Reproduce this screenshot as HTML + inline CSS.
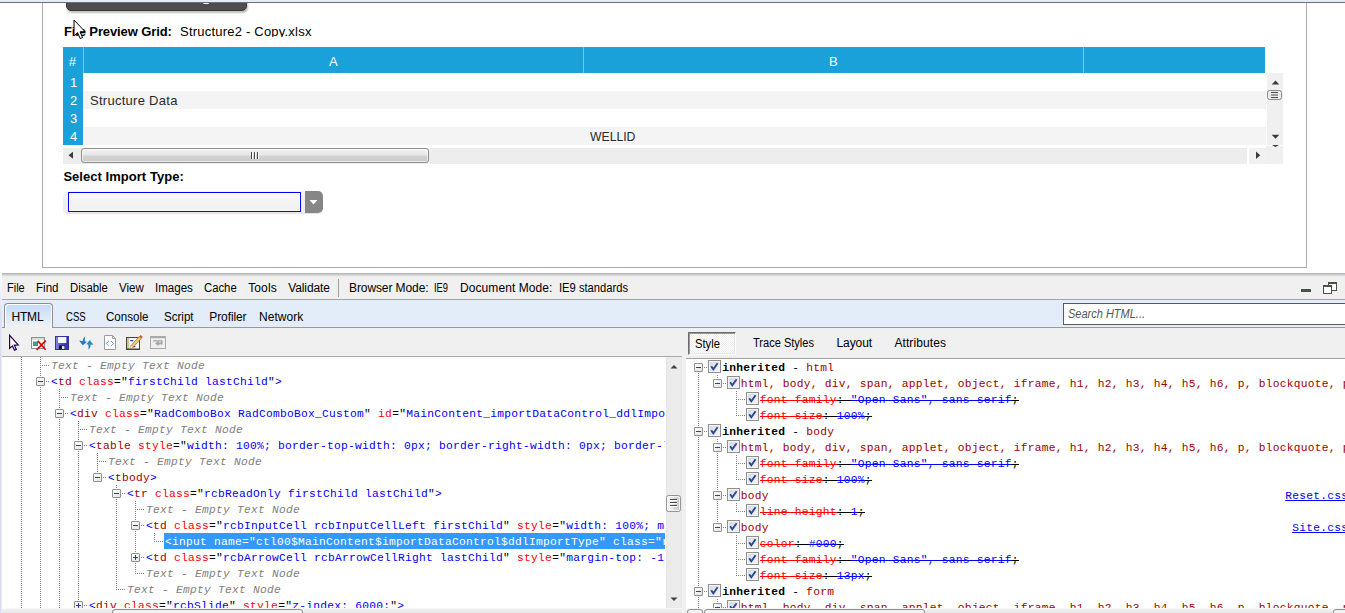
<!DOCTYPE html>
<html lang="en">
<head>
<meta charset="utf-8">
<title>Import Data - Developer Tools</title>
<style>
*{box-sizing:border-box;margin:0;padding:0}
html,body{width:1345px;height:613px;overflow:hidden;background:#fff;font-family:"Liberation Sans",sans-serif}
body{position:relative}
.abs,.t,.row,.bx,.hd,.vd,.cb{position:absolute}
.t{white-space:pre;line-height:20px;height:20px}
i{font-style:normal}
/* page */
#topstrip{left:0;top:0;width:1345px;height:2px;background:#e3edf9}
#topline{left:0;top:2px;width:1345px;height:1px;background:#707070}
#container{left:42px;top:-5px;width:1265px;height:273px;border:1px solid #ababab}
#darkbtn{left:66px;top:-10px;width:181px;height:21px;background:#4d4d4d;border:1px solid #3a3a3a;border-radius:5px;box-shadow:1px 2px 2px rgba(0,0,0,.25)}
#darkmark{left:203px;top:3px;width:6px;height:1px;background:linear-gradient(90deg,#aaa,#fff 25%,#fff 75%,#aaa)}
#ghead{left:63px;top:47px;width:1202px;height:26px;background:#1ba1da}
.csep{top:47px;width:1px;height:26px;background:#a3b9c4}
#gnum{left:63px;top:73px;width:20px;height:72px;background:#1ba1da}
.grow{left:83px;width:1183px;height:18px}
#vsb{left:1267px;top:73px;width:16px;height:72px;background:#f0f0f0}
#vcorner{left:1266px;top:146px;width:17px;height:18px;background:#f0f0f0}
#hbtn{left:1249px;top:148px;width:17px;height:16px;background:#f1f1f1}
#hsb{left:63px;top:148px;width:1184px;height:16px;background:#ededed}
#hthumb{left:81px;top:148px;width:348px;height:15px;border:1px solid #8f8f8f;border-radius:3px;background:linear-gradient(#f4f4f4,#e6e6e6 45%,#d4d4d4 55%,#c9c9c9);box-shadow:inset 0 0 0 1px rgba(255,255,255,.6)}
#combo{left:63px;top:191px;width:260px;height:22px;background:linear-gradient(#f6f6f6,#ececec);border-radius:5px;box-shadow:0 1px 1px rgba(0,0,0,.12)}
#cinput{left:68px;top:192px;width:233px;height:20px;border:1px solid #0000f6;background:linear-gradient(#fcfcfc,#f4f4f4 40%,#f2f2f2);box-shadow:inset 0 0 0 1px #fdfdf4}
#carrow{left:305px;top:191px;width:18px;height:22px;background:#868686;border-radius:0 5px 5px 0}
/* devtools */
#dt{left:2px;top:273px;width:1343px;height:340px;background:#f0f0f0}
#dttop{left:2px;top:273px;width:1343px;height:4px;background:linear-gradient(#b0b0b0,#c4c4c4 30%,#e2e2e2 70%,#f0f0f0)}
#menusep{left:338px;top:279px;width:1px;height:18px;background:#a0a0a0}
#tabbar{left:2px;top:299px;width:1343px;height:29px;background:#e3edf9;border-top:1px solid #a5a5a5;border-bottom:1px solid #9a9a9a}
#htmltab{left:4px;top:303px;width:49px;height:25px;border:1px solid #8e8e8e;border-bottom:none;border-radius:4px 4px 0 0;background:linear-gradient(#c3daf8,#dce8f8 55%,#eef1f5 90%,#f0f0f0);box-shadow:inset 1px 1px 0 #fff,inset -1px 0 0 #fff}
#search{left:1063px;top:303px;width:290px;height:22px;background:#fff;border:1px solid #5a5a5a}
#toolbar{left:2px;top:328px;width:1343px;height:28px;background:#f0f0f0}
#tbline{left:2px;top:356px;width:680px;height:1px;background:#a9a9a9}
#tbline2{left:686px;top:358px;width:660px;height:1px;background:#a2a2a2}
#ltree{left:2px;top:357px;width:664px;height:251px;background:#fff;overflow:hidden}
#rtree{left:686px;top:359px;width:659px;height:249px;background:#fff;overflow:hidden}
#lsb{left:666px;top:357px;width:16px;height:251px;background:linear-gradient(90deg,#e3e3e3,#ebebeb 2px,#ececec 14px,#e8e8e8)}
#split{left:682px;top:357px;width:4px;height:256px;background:#f0f0f0}
#lthumb{left:666px;top:495px;width:15px;height:17px;border:1px solid #949494;border-radius:2.5px;background:linear-gradient(90deg,#f5f5f5,#e8e8e8 45%,#d6d6d6 55%,#cdcdcd);box-shadow:inset 0 0 0 1px rgba(255,255,255,.7)}
#lhs{left:2px;top:608px;width:680px;height:5px;background:linear-gradient(#fbfbfb,#efefef 1.5px,#e6e6e6)}
#lhthumb{left:112px;top:609px;width:191px;height:6px;border:1px solid #8e8e8e;border-radius:3px;background:#f2f2f2}
#rhs{left:686px;top:608px;width:659px;height:5px;background:linear-gradient(#fbfbfb,#efefef 1.5px,#e6e6e6)}
#rhbtn{left:687px;top:609px;width:16px;height:6px;border:1px solid #8e8e8e;border-radius:3px;background:#f2f2f2}
#rhthumb{left:704px;top:609px;width:221px;height:6px;border:1px solid #8e8e8e;border-radius:3px;background:#f2f2f2}
#rhbtn2{left:1333px;top:609px;width:17px;height:6px;border:1px solid #8e8e8e;border-radius:3px;background:#f2f2f2}
#stylebtn{left:688px;top:332px;width:48px;height:23px;border-style:solid;border-width:1px;border-color:#6b6b6b #fff #fff #6b6b6b;background:repeating-conic-gradient(#fff 0 25%,#efefef 0 50%) 0 0/2px 2px;box-shadow:inset 1px 1px 0 #9a9a9a,inset -1px -1px 0 #e6e6e6}
.row{white-space:pre;font:11.25px/16px "Liberation Mono",monospace;letter-spacing:0.249px;height:16px;color:#000}
.row b{font-weight:normal}
.row .g{color:#a00000}.row .a{color:#ff0000}.row .v{color:#0000ff}.row .e,.e{color:#808080;font-style:italic}
.row .inh{font-weight:bold;color:#000}
.row s{display:inline-block;height:16px;vertical-align:top;text-decoration:none;background:linear-gradient(currentColor,currentColor) 0 8px/100% 1px no-repeat}
.row.sel{background:#3399ff;color:#fff}
.row.lnk{color:#0000ff;text-decoration:underline}
.bx{width:9px;height:9px;border:1px solid #919191;background:linear-gradient(135deg,#fff,#e2e2e2);border-radius:1px}
.bx .h{position:absolute;left:1px;top:3px;width:5px;height:1px;background:#2a3f9a}
.bx .vv{position:absolute;left:3px;top:1px;width:1px;height:5px;background:#2a3f9a}
.hd{height:1px;background:repeating-linear-gradient(90deg,#808080 0 1px,transparent 1px 2px)}
.vd{width:1px;background:repeating-linear-gradient(180deg,#808080 0 1px,transparent 1px 2px)}
.cb{width:13px;height:13px;border:1px solid #8e8f8f;background:linear-gradient(135deg,#d4d8dc,#f6f6f6);box-shadow:inset 0 0 0 1px #f4f4f4}
.cb svg{position:absolute;left:0;top:0}
</style>
</head>
<body>
<!-- page -->
<div class="abs" id="container"></div>
<div class="abs" id="darkbtn"></div><div class="abs" id="darkmark"></div>
<div class="abs" id="topstrip"></div><div class="abs" id="topline"></div>
<div class="abs" id="ghead"></div>
<div class="abs csep" style="left:83px"></div><div class="abs csep" style="left:583px"></div><div class="abs csep" style="left:1083px"></div>
<div class="abs" id="gnum"></div>
<div class="abs grow" style="top:73px;background:#fff"></div>
<div class="abs grow" style="top:91px;background:#f4f4f4"></div>
<div class="abs grow" style="top:109px;background:#fff"></div>
<div class="abs grow" style="top:127px;background:#f4f4f4"></div>
<div class="abs" id="vsb"></div>
<div class="abs" id="hsb"></div><div class="abs" id="vcorner"></div><div class="abs" id="hbtn"></div>
<div class="abs" id="hthumb"></div>
<svg class="abs" style="left:63px;top:73px" width="1225" height="95" viewBox="0 0 1225 95">
  <!-- h scrollbar arrows -->
  <path d="M5.500 82.300 L10 78.800 L10 85.800 Z" fill="#3a3a3a"/>
  <path d="M1197.200 82.300 L1193 78.600 L1193 86 Z" fill="#3a3a3a"/>
  <!-- grip -->
  <path d="M189.500 79v7M192.500 79v7M195.500 79v7" stroke="#fff" stroke-width="1"/><path d="M188.500 79v7M191.500 79v7M194.500 79v7" stroke="#4a4a4a" stroke-width="1"/>
  <!-- v scrollbar -->
  <path d="M1208.700 11.500 L1212.500 7.500 L1216.300 11.500 Z" fill="#3a3a3a"/>
  <path d="M1208.700 61.800 L1212.500 65.800 L1216.300 61.800 Z" fill="#3a3a3a"/>
  <path d="M1209 72 L1212.500 74 L1216 72 Z" fill="#3a3a3a"/>
  <rect x="1204.500" y="17.500" width="14" height="9" rx="2" fill="#ececec" stroke="#8a8a8a"/>
  <path d="M1208 19.500h7M1208 22h7M1208 24.500h7" stroke="#4a4a4a" stroke-width="1"/>
</svg>
<div class="abs" id="combo"></div><div class="abs" id="cinput"></div><div class="abs" id="carrow"></div>
<svg class="abs" style="left:309px;top:199px" width="10" height="7" viewBox="0 0 10 7"><path d="M0.600 1h7.800L4.500 5.500z" fill="#fff"/></svg>
<!-- mouse cursor -->


<!-- devtools -->
<div class="abs" style="left:0;top:273px;width:2px;height:340px;background:linear-gradient(rgba(255,255,255,1),rgba(255,255,255,.4) 27px,rgba(255,255,255,0) 40px),linear-gradient(90deg,#d3d7ef,#eceefa)"></div>
<div class="abs" id="dt"></div><div class="abs" id="dttop"></div>
<div class="abs" id="menusep"></div>
<div class="abs" id="tabbar"></div>
<div class="abs" id="htmltab"></div>
<div class="abs" id="search"></div>
<div class="abs" id="toolbar"></div>
<div class="abs" id="tbline"></div><div class="abs" id="tbline2"></div>
<div class="abs" id="stylebtn"></div>
<div class="abs" id="ltree">
<div class="row" style="left:49.0px;top:1px"><i class="e">Text - Empty Text Node</i></div>
<div class="hd" style="left:40px;top:8px;width:7px"></div>
<div class="row" style="left:49.0px;top:17px"><b class="v">&lt;</b><b class="g">td</b> <b class="a">class</b>=&quot;<b class="v">firstChild lastChild</b>&quot;<b class="v">&gt;</b></div>
<div class="bx" style="left:34px;top:20px"><i class="h"></i></div>
<div class="hd" style="left:44px;top:24px;width:3px"></div>
<div class="row" style="left:68.0px;top:33px"><i class="e">Text - Empty Text Node</i></div>
<div class="hd" style="left:59px;top:40px;width:7px"></div>
<div class="row" style="left:68.0px;top:49px"><b class="v">&lt;</b><b class="g">div</b> <b class="a">class</b>=&quot;<b class="v">RadComboBox RadComboBox_Custom</b>&quot; <b class="a">id</b>=&quot;<b class="v">MainContent_importDataControl_ddlImportType</b></div>
<div class="bx" style="left:53px;top:52px"><i class="h"></i></div>
<div class="hd" style="left:63px;top:56px;width:3px"></div>
<div class="row" style="left:87.0px;top:65px"><i class="e">Text - Empty Text Node</i></div>
<div class="hd" style="left:78px;top:72px;width:7px"></div>
<div class="row" style="left:87.0px;top:81px"><b class="v">&lt;</b><b class="g">table</b> <b class="a">style</b>=&quot;<b class="v">width: 100%; border-top-width: 0px; border-right-width: 0px; border-left-width: 0px;</b></div>
<div class="bx" style="left:72px;top:84px"><i class="h"></i></div>
<div class="hd" style="left:82px;top:88px;width:3px"></div>
<div class="row" style="left:106.0px;top:97px"><i class="e">Text - Empty Text Node</i></div>
<div class="hd" style="left:97px;top:104px;width:7px"></div>
<div class="row" style="left:106.0px;top:113px"><b class="v">&lt;</b><b class="g">tbody</b><b class="v">&gt;</b></div>
<div class="bx" style="left:91px;top:116px"><i class="h"></i></div>
<div class="hd" style="left:101px;top:120px;width:3px"></div>
<div class="row" style="left:125.0px;top:129px"><b class="v">&lt;</b><b class="g">tr</b> <b class="a">class</b>=&quot;<b class="v">rcbReadOnly firstChild lastChild</b>&quot;<b class="v">&gt;</b></div>
<div class="bx" style="left:110px;top:132px"><i class="h"></i></div>
<div class="hd" style="left:120px;top:136px;width:3px"></div>
<div class="row" style="left:144.0px;top:145px"><i class="e">Text - Empty Text Node</i></div>
<div class="hd" style="left:135px;top:152px;width:7px"></div>
<div class="row" style="left:144.0px;top:161px"><b class="v">&lt;</b><b class="g">td</b> <b class="a">class</b>=&quot;<b class="v">rcbInputCell rcbInputCellLeft firstChild</b>&quot; <b class="a">style</b>=&quot;<b class="v">width: 100%; margin-top: -1px;</b></div>
<div class="bx" style="left:129px;top:164px"><i class="h"></i></div>
<div class="hd" style="left:139px;top:168px;width:3px"></div>
<div class="row sel" style="left:161.5px;top:176px;padding-left:1.5px;width:800px"><span style="position:relative;top:1px">&lt;input name=&quot;ctl00$MainContent$importDataControl$ddlImportType&quot; class=&quot;rcbInput radPreventDecorate&quot;</span></div>
<div class="hd" style="left:154px;top:184px;width:7px"></div>
<div class="row" style="left:144.0px;top:193px"><b class="v">&lt;</b><b class="g">td</b> <b class="a">class</b>=&quot;<b class="v">rcbArrowCell rcbArrowCellRight lastChild</b>&quot; <b class="a">style</b>=&quot;<b class="v">margin-top: -1px; margin-bottom: -1px;</b></div>
<div class="bx" style="left:129px;top:196px"><i class="h"></i><i class="vv"></i></div>
<div class="hd" style="left:139px;top:200px;width:3px"></div>
<div class="row" style="left:144.0px;top:209px"><i class="e">Text - Empty Text Node</i></div>
<div class="hd" style="left:135px;top:216px;width:7px"></div>
<div class="row" style="left:125.0px;top:225px"><i class="e">Text - Empty Text Node</i></div>
<div class="hd" style="left:116px;top:232px;width:7px"></div>
<div class="row" style="left:87.0px;top:241px"><b class="v">&lt;</b><b class="g">div</b> <b class="a">class</b>=&quot;<b class="v">rcbSlide</b>&quot; <b class="a">style</b>=&quot;<b class="v">z-index: 6000;</b>&quot;<b class="v">&gt;</b></div>
<div class="bx" style="left:72px;top:244px"><i class="h"></i><i class="vv"></i></div>
<div class="hd" style="left:82px;top:248px;width:3px"></div>
<div class="vd" style="left:19px;top:0px;height:254px"></div>
<div class="vd" style="left:38px;top:0px;height:20px"></div>
<div class="vd" style="left:38px;top:30px;height:224px"></div>
<div class="vd" style="left:57px;top:32px;height:20px"></div>
<div class="vd" style="left:57px;top:62px;height:192px"></div>
<div class="vd" style="left:76px;top:64px;height:20px"></div>
<div class="vd" style="left:76px;top:94px;height:150px"></div>

<div class="vd" style="left:95px;top:96px;height:20px"></div>
<div class="vd" style="left:114px;top:128px;height:4px"></div>
<div class="vd" style="left:114px;top:142px;height:91px"></div>
<div class="vd" style="left:133px;top:144px;height:20px"></div>
<div class="vd" style="left:133px;top:174px;height:22px"></div>
<div class="vd" style="left:133px;top:206px;height:11px"></div>
<div class="vd" style="left:152px;top:176px;height:9px"></div>
</div>
<div class="abs" style="left:665px;top:357px;width:1px;height:251px;background:#fff"></div>
<div class="abs" id="lsb"></div><div class="abs" id="split"></div><div class="abs" id="lthumb"></div>
<div class="abs" id="rtree">
<div class="row" style="left:36.2px;top:1px"><b class="inh">inherited</b> - <b class="g">html</b></div>
<div class="cb" style="left:22px;top:1px"><svg width="11" height="11" viewBox="0 0 11 11"><path d="M2.2 5.2 L4.3 8.3 L8.6 2.2" fill="none" stroke="#2b4a9c" stroke-width="1.9"/></svg></div>
<div class="bx" style="left:8px;top:4px"><i class="h"></i></div>
<div class="hd" style="left:18px;top:8px;width:3px"></div>
<div class="row" style="left:54.8px;top:17px"><b class="g">html, body, div, span, applet, object, iframe, h1, h2, h3, h4, h5, h6, p, blockquote, pre, a, abbr</b></div>
<div class="cb" style="left:41px;top:17px"><svg width="11" height="11" viewBox="0 0 11 11"><path d="M2.2 5.2 L4.3 8.3 L8.6 2.2" fill="none" stroke="#2b4a9c" stroke-width="1.9"/></svg></div>
<div class="bx" style="left:27px;top:20px"><i class="h"></i></div>
<div class="hd" style="left:37px;top:24px;width:3px"></div>
<div class="row" style="left:73.8px;top:33px"><s class="a">font-family</s><s>: </s><s class="v">&quot;Open Sans&quot;, sans-serif</s><s>;</s></div>
<div class="cb" style="left:60px;top:33px"><svg width="11" height="11" viewBox="0 0 11 11"><path d="M2.2 5.2 L4.3 8.3 L8.6 2.2" fill="none" stroke="#2b4a9c" stroke-width="1.9"/></svg></div>
<div class="hd" style="left:52px;top:40px;width:7px"></div>
<div class="row" style="left:73.8px;top:49px"><s class="a">font-size</s><s>: </s><s class="v">100%</s><s>;</s></div>
<div class="cb" style="left:60px;top:49px"><svg width="11" height="11" viewBox="0 0 11 11"><path d="M2.2 5.2 L4.3 8.3 L8.6 2.2" fill="none" stroke="#2b4a9c" stroke-width="1.9"/></svg></div>
<div class="hd" style="left:52px;top:56px;width:7px"></div>
<div class="row" style="left:36.2px;top:65px"><b class="inh">inherited</b> - <b class="g">body</b></div>
<div class="cb" style="left:22px;top:65px"><svg width="11" height="11" viewBox="0 0 11 11"><path d="M2.2 5.2 L4.3 8.3 L8.6 2.2" fill="none" stroke="#2b4a9c" stroke-width="1.9"/></svg></div>
<div class="bx" style="left:8px;top:68px"><i class="h"></i></div>
<div class="hd" style="left:18px;top:72px;width:3px"></div>
<div class="row" style="left:54.8px;top:81px"><b class="g">html, body, div, span, applet, object, iframe, h1, h2, h3, h4, h5, h6, p, blockquote, pre, a, abbr</b></div>
<div class="cb" style="left:41px;top:81px"><svg width="11" height="11" viewBox="0 0 11 11"><path d="M2.2 5.2 L4.3 8.3 L8.6 2.2" fill="none" stroke="#2b4a9c" stroke-width="1.9"/></svg></div>
<div class="bx" style="left:27px;top:84px"><i class="h"></i></div>
<div class="hd" style="left:37px;top:88px;width:3px"></div>
<div class="row" style="left:73.8px;top:97px"><s class="a">font-family</s><s>: </s><s class="v">&quot;Open Sans&quot;, sans-serif</s><s>;</s></div>
<div class="cb" style="left:60px;top:97px"><svg width="11" height="11" viewBox="0 0 11 11"><path d="M2.2 5.2 L4.3 8.3 L8.6 2.2" fill="none" stroke="#2b4a9c" stroke-width="1.9"/></svg></div>
<div class="hd" style="left:52px;top:104px;width:7px"></div>
<div class="row" style="left:73.8px;top:113px"><s class="a">font-size</s><s>: </s><s class="v">100%</s><s>;</s></div>
<div class="cb" style="left:60px;top:113px"><svg width="11" height="11" viewBox="0 0 11 11"><path d="M2.2 5.2 L4.3 8.3 L8.6 2.2" fill="none" stroke="#2b4a9c" stroke-width="1.9"/></svg></div>
<div class="hd" style="left:52px;top:120px;width:7px"></div>
<div class="row" style="left:54.8px;top:129px"><b class="g">body</b></div>
<div class="cb" style="left:41px;top:129px"><svg width="11" height="11" viewBox="0 0 11 11"><path d="M2.2 5.2 L4.3 8.3 L8.6 2.2" fill="none" stroke="#2b4a9c" stroke-width="1.9"/></svg></div>
<div class="bx" style="left:27px;top:132px"><i class="h"></i></div>
<div class="hd" style="left:37px;top:136px;width:3px"></div>
<div class="row" style="left:73.8px;top:145px"><s class="a">line-height</s><s>: </s><s class="v">1</s><s>;</s></div>
<div class="cb" style="left:60px;top:145px"><svg width="11" height="11" viewBox="0 0 11 11"><path d="M2.2 5.2 L4.3 8.3 L8.6 2.2" fill="none" stroke="#2b4a9c" stroke-width="1.9"/></svg></div>
<div class="hd" style="left:52px;top:152px;width:7px"></div>
<div class="row" style="left:54.8px;top:161px"><b class="g">body</b></div>
<div class="cb" style="left:41px;top:161px"><svg width="11" height="11" viewBox="0 0 11 11"><path d="M2.2 5.2 L4.3 8.3 L8.6 2.2" fill="none" stroke="#2b4a9c" stroke-width="1.9"/></svg></div>
<div class="bx" style="left:27px;top:164px"><i class="h"></i></div>
<div class="hd" style="left:37px;top:168px;width:3px"></div>
<div class="row" style="left:73.8px;top:177px"><s class="a">color</s><s>: </s><s class="v">#000</s><s>;</s></div>
<div class="cb" style="left:60px;top:177px"><svg width="11" height="11" viewBox="0 0 11 11"><path d="M2.2 5.2 L4.3 8.3 L8.6 2.2" fill="none" stroke="#2b4a9c" stroke-width="1.9"/></svg></div>
<div class="hd" style="left:52px;top:184px;width:7px"></div>
<div class="row" style="left:73.8px;top:193px"><s class="a">font-family</s><s>: </s><s class="v">&quot;Open Sans&quot;, sans-serif</s><s>;</s></div>
<div class="cb" style="left:60px;top:193px"><svg width="11" height="11" viewBox="0 0 11 11"><path d="M2.2 5.2 L4.3 8.3 L8.6 2.2" fill="none" stroke="#2b4a9c" stroke-width="1.9"/></svg></div>
<div class="hd" style="left:52px;top:200px;width:7px"></div>
<div class="row" style="left:73.8px;top:209px"><s class="a">font-size</s><s>: </s><s class="v">13px</s><s>;</s></div>
<div class="cb" style="left:60px;top:209px"><svg width="11" height="11" viewBox="0 0 11 11"><path d="M2.2 5.2 L4.3 8.3 L8.6 2.2" fill="none" stroke="#2b4a9c" stroke-width="1.9"/></svg></div>
<div class="hd" style="left:52px;top:216px;width:7px"></div>
<div class="row" style="left:36.2px;top:225px"><b class="inh">inherited</b> - <b class="g">form</b></div>
<div class="cb" style="left:22px;top:225px"><svg width="11" height="11" viewBox="0 0 11 11"><path d="M2.2 5.2 L4.3 8.3 L8.6 2.2" fill="none" stroke="#2b4a9c" stroke-width="1.9"/></svg></div>
<div class="bx" style="left:8px;top:228px"><i class="h"></i></div>
<div class="hd" style="left:18px;top:232px;width:3px"></div>
<div class="row" style="left:54.8px;top:241px"><b class="g">html, body, div, span, applet, object, iframe, h1, h2, h3, h4, h5, h6, p, blockquote, pre, a, abbr</b></div>
<div class="cb" style="left:41px;top:241px"><svg width="11" height="11" viewBox="0 0 11 11"><path d="M2.2 5.2 L4.3 8.3 L8.6 2.2" fill="none" stroke="#2b4a9c" stroke-width="1.9"/></svg></div>
<div class="bx" style="left:27px;top:244px"><i class="h"></i></div>
<div class="hd" style="left:37px;top:248px;width:3px"></div>
<div class="vd" style="left:12px;top:14px;height:54px"></div>
<div class="vd" style="left:12px;top:78px;height:150px"></div>
<div class="vd" style="left:12px;top:238px;height:14px"></div>
<div class="vd" style="left:31px;top:16px;height:4px"></div>
<div class="vd" style="left:31px;top:80px;height:4px"></div>
<div class="vd" style="left:31px;top:94px;height:38px"></div>
<div class="vd" style="left:31px;top:142px;height:22px"></div>
<div class="vd" style="left:31px;top:240px;height:4px"></div>
<div class="vd" style="left:50px;top:32px;height:25px"></div>
<div class="vd" style="left:50px;top:96px;height:25px"></div>
<div class="vd" style="left:50px;top:144px;height:9px"></div>
<div class="vd" style="left:50px;top:176px;height:41px"></div>
<div class="row lnk" style="left:599.2px;top:129px">Reset.css</div>
<div class="row lnk" style="left:606.2px;top:161px">Site.css</div>
</div>
<div class="abs" id="lhs"></div><div class="abs" id="lhthumb"></div>
<div class="abs" id="rhs"></div><div class="abs" id="rhbtn"></div><div class="abs" id="rhthumb"></div><div class="abs" id="rhbtn2"></div>
<svg class="abs" style="left:666px;top:357px" width="16" height="253" viewBox="0 0 16 253">
  <path d="M4.5 11.5 L8 8 L11.5 11.5 Z" fill="#404040"/>
  <path d="M4.5 240.5 L8 244 L11.5 240.5 Z" fill="#404040"/>
  <path d="M4 143.500h7M4 146.500h7M4 149.500h7" stroke="#fff" stroke-width="1"/><path d="M4 142.500h7M4 145.500h7M4 148.500h7" stroke="#4a4a4a" stroke-width="1"/>
</svg>
<!-- window controls -->
<svg class="abs" style="left:1296px;top:278px" width="46" height="20" viewBox="0 0 46 20">
  <rect x="5" y="11" width="10" height="3" fill="#485346"/>
  <rect x="32.500" y="4.500" width="8" height="8" fill="#fff" stroke="#485346"/>
  <rect x="32" y="4" width="9" height="2" fill="#485346"/>
  <rect x="27.500" y="7.500" width="8" height="8" fill="#fff" stroke="#485346"/>
  <rect x="27" y="7" width="9" height="2" fill="#485346"/>
</svg>
<!-- toolbar icons -->
<svg class="abs" style="left:2px;top:328px" width="180" height="28" viewBox="0 0 180 28">
  <defs>
    <linearGradient id="fl" x1="0" x2="1" y1="0" y2="0"><stop offset="0" stop-color="#8c8cea"/><stop offset=".35" stop-color="#5656d2"/><stop offset="1" stop-color="#2f2f9c"/></linearGradient>
    <linearGradient id="ar" x1="0" x2="0" y1="0" y2="1"><stop offset="0" stop-color="#2a9ab8"/><stop offset="1" stop-color="#1768d8"/></linearGradient>
  </defs>
  <!-- pointer -->
  <path d="M7.600 7.400 L7.600 20.400 L10.400 17.900 L12.500 22.300 L14.300 21.500 L12.300 17.100 L16.200 16.900 Z" fill="#fff" stroke="#1e0452" stroke-width="1.200"/>
  <!-- window + red X -->
  <rect x="29.500" y="9.500" width="13" height="11" fill="#fff" stroke="#8e8e8e"/>
  <rect x="30" y="10" width="12" height="2" fill="#cfe6c8"/>
  <rect x="31" y="13.500" width="5" height="4.500" fill="#3f86b4"/>
  <rect x="32" y="14.500" width="2.500" height="2.500" fill="#55a860"/>
  <path d="M35.800 12.900 L43.600 21.800 M43.800 12.700 L34.600 21.800" stroke="#e00808" stroke-width="1.700"/>
  <!-- floppy -->
  <rect x="53.500" y="8.500" width="13" height="13" fill="url(#fl)" stroke="#34349e"/>
  <rect x="56" y="9" width="8.300" height="6" fill="#f6f6ff"/>
  <rect x="57" y="17.400" width="6" height="4" fill="#15153a"/>
  <rect x="60" y="18" width="2.500" height="3" fill="#e4e4e4"/>
  <!-- refresh -->
  <path d="M83.500 8 C81.500 9.500 80.500 11.500 80.800 13.200 L77 12.600 L80.800 17.200 L85 13.800 L83 13.500 C82.600 11.500 83 9.500 83.500 8 Z" fill="url(#ar)"/>
  <path d="M86.500 21.400 C88.200 20 88.800 18.200 88.500 16.500 L91.300 16.800 L87.800 12 L84.300 16.200 L86.300 16.400 C86.600 18 86.600 20 86.500 21.400 Z" fill="url(#ar)"/>
  <!-- document -->
  <path d="M102.500 7.500 L110.500 7.500 L113.500 10.500 L113.500 21.500 L102.500 21.500 Z" fill="#fff" stroke="#9a9aa2"/>
  <path d="M110.500 7.500 L110.500 10.500 L113.500 10.500" fill="none" stroke="#9a9aa2"/>
  <path d="M106.800 13 L104.300 15.500 L106.800 18 M109 13 L111.500 15.500 L109 18" fill="none" stroke="#2a6ad0" stroke-width="1" stroke-dasharray="1.100 .5"/>
  <!-- notepad + pencil -->
  <rect x="124.500" y="9.500" width="13" height="12" fill="#fff" stroke="#4a4232"/>
  <rect x="125" y="10" width="2.300" height="11" fill="#c9c2a4"/>
  <rect x="124" y="20.500" width="14" height="1.500" fill="#4a4232"/>
  <path d="M128.300 12.600 h3 M128.300 18.600 h5" stroke="#1c2cf0" stroke-width="1.300"/>
  <path d="M128.600 18 L137.200 8.600 L139.300 10.500 L130.600 19.800 L128.300 20.300 Z" fill="#ecd06a" stroke="#8a6a20" stroke-width=".7"/>
  <path d="M137.200 8.600 L138.800 7 L140.600 8.700 L139.300 10.500 Z" fill="#c8584a"/>
  <path d="M128.600 18 L130.600 19.800 L128.300 20.300 Z" fill="#fff"/>
  <!-- gray window -->
  <rect x="148.500" y="8.500" width="15" height="12" fill="#efefef" stroke="#a9a9a9"/>
  <rect x="148" y="8" width="16" height="2.200" fill="#a9a9a9"/>
  <path d="M151 12.200 h9.500 v4.300 h-3.800 v1.600 l-3.700 -2.600 l3.700 -2.600 v1.500 h2.300 v-1 h-8 z" fill="#a4a4a4"/>
</svg>
<span class="t" style='left:63.9px;top:21.50px;font:normal bold 13px/20px "Liberation Sans", sans-serif;color:#000;letter-spacing:-0.113px;'>File Preview Grid:</span>
<span class="t" style='left:180.0px;top:21.50px;font:normal normal 13px/20px "Liberation Sans", sans-serif;color:#000;letter-spacing:0.213px;height:15.5px;overflow:hidden;'>Structure2 - Copy.xlsx</span>
<span class="t" style='left:68.7px;top:51.50px;font:normal normal 13px/20px "Liberation Sans", sans-serif;color:#fff;letter-spacing:0.766px;'>#</span>
<span class="t" style='left:329.0px;top:51.50px;font:normal normal 13px/20px "Liberation Sans", sans-serif;color:#fff;'>A</span>
<span class="t" style='left:829.0px;top:51.50px;font:normal normal 13px/20px "Liberation Sans", sans-serif;color:#fff;'>B</span>
<span class="t" style='left:70.0px;top:72.50px;font:normal normal 13px/20px "Liberation Sans", sans-serif;color:#fff;'>1</span>
<span class="t" style='left:70.0px;top:90.50px;font:normal normal 13px/20px "Liberation Sans", sans-serif;color:#fff;'>2</span>
<span class="t" style='left:70.0px;top:108.50px;font:normal normal 13px/20px "Liberation Sans", sans-serif;color:#fff;'>3</span>
<span class="t" style='left:70.0px;top:126.50px;font:normal normal 13px/20px "Liberation Sans", sans-serif;color:#fff;'>4</span>
<span class="t" style='left:90.0px;top:90.50px;font:normal normal 13px/20px "Liberation Sans", sans-serif;color:#2a2a2a;letter-spacing:0.277px;'>Structure Data</span>
<span class="t" style='left:590.2px;top:126.50px;font:normal normal 13px/20px "Liberation Sans", sans-serif;color:#2a2a2a;transform:scaleX(0.9379);transform-origin:0 0;'>WELLID</span>
<span class="t" style='left:63.4px;top:167.10px;font:normal bold 13px/20px "Liberation Sans", sans-serif;color:#000;letter-spacing:0.038px;'>Select Import Type:</span>
<span class="t" style='left:7.1px;top:277.84px;font:normal normal 12px/20px "Liberation Sans", sans-serif;color:#000;transform:scaleX(0.9150);transform-origin:0 0;'>File</span>
<span class="t" style='left:36.1px;top:277.84px;font:normal normal 12px/20px "Liberation Sans", sans-serif;color:#000;transform:scaleX(0.9639);transform-origin:0 0;'>Find</span>
<span class="t" style='left:70.3px;top:277.84px;font:normal normal 12px/20px "Liberation Sans", sans-serif;color:#000;transform:scaleX(0.9468);transform-origin:0 0;'>Disable</span>
<span class="t" style='left:118.8px;top:277.84px;font:normal normal 12px/20px "Liberation Sans", sans-serif;color:#000;transform:scaleX(0.9614);transform-origin:0 0;'>View</span>
<span class="t" style='left:154.7px;top:277.84px;font:normal normal 12px/20px "Liberation Sans", sans-serif;color:#000;transform:scaleX(0.9629);transform-origin:0 0;'>Images</span>
<span class="t" style='left:204.2px;top:277.84px;font:normal normal 12px/20px "Liberation Sans", sans-serif;color:#000;transform:scaleX(0.9427);transform-origin:0 0;'>Cache</span>
<span class="t" style='left:248.2px;top:277.84px;font:normal normal 12px/20px "Liberation Sans", sans-serif;color:#000;letter-spacing:0.117px;'>Tools</span>
<span class="t" style='left:288.2px;top:277.84px;font:normal normal 12px/20px "Liberation Sans", sans-serif;color:#000;letter-spacing:-0.098px;'>Validate</span>
<span class="t" style='left:349.0px;top:277.84px;font:normal normal 12px/20px "Liberation Sans", sans-serif;color:#000;letter-spacing:-0.093px;'>Browser Mode:</span>
<span class="t" style='left:434.0px;top:277.84px;font:normal normal 12px/20px "Liberation Sans", sans-serif;color:#000;transform:scaleX(0.7771);transform-origin:0 0;'>IE9</span>
<span class="t" style='left:460.0px;top:277.84px;font:normal normal 12px/20px "Liberation Sans", sans-serif;color:#000;letter-spacing:0.079px;'>Document Mode:</span>
<span class="t" style='left:558.5px;top:277.84px;font:normal normal 12px/20px "Liberation Sans", sans-serif;color:#000;transform:scaleX(0.9318);transform-origin:0 0;'>IE9 standards</span>
<span class="t" style='left:11.4px;top:306.84px;font:normal normal 12px/20px "Liberation Sans", sans-serif;color:#000;letter-spacing:-0.143px;'>HTML</span>
<span class="t" style='left:66.2px;top:306.84px;font:normal normal 12px/20px "Liberation Sans", sans-serif;color:#000;transform:scaleX(0.7980);transform-origin:0 0;'>CSS</span>
<span class="t" style='left:106.2px;top:306.84px;font:normal normal 12px/20px "Liberation Sans", sans-serif;color:#000;transform:scaleX(0.9630);transform-origin:0 0;'>Console</span>
<span class="t" style='left:163.8px;top:306.84px;font:normal normal 12px/20px "Liberation Sans", sans-serif;color:#000;transform:scaleX(0.9646);transform-origin:0 0;'>Script</span>
<span class="t" style='left:209.3px;top:306.84px;font:normal normal 12px/20px "Liberation Sans", sans-serif;color:#000;letter-spacing:-0.102px;'>Profiler</span>
<span class="t" style='left:259.1px;top:306.84px;font:normal normal 12px/20px "Liberation Sans", sans-serif;color:#000;letter-spacing:0.026px;'>Network</span>
<span class="t" style='left:1068.0px;top:303.84px;font:italic normal 12px/20px "Liberation Sans", sans-serif;color:#555;transform:scaleX(0.9163);transform-origin:0 0;'>Search HTML...</span>
<span class="t" style='left:695.2px;top:333.84px;font:normal normal 12px/20px "Liberation Sans", sans-serif;color:#000;transform:scaleX(0.9368);transform-origin:0 0;'>Style</span>
<span class="t" style='left:752.8px;top:332.84px;font:normal normal 12px/20px "Liberation Sans", sans-serif;color:#000;transform:scaleX(0.9208);transform-origin:0 0;'>Trace Styles</span>
<span class="t" style='left:836.5px;top:332.84px;font:normal normal 12px/20px "Liberation Sans", sans-serif;color:#000;letter-spacing:-0.089px;'>Layout</span>
<span class="t" style='left:894.4px;top:332.84px;font:normal normal 12px/20px "Liberation Sans", sans-serif;color:#000;letter-spacing:0.090px;'>Attributes</span>
<svg class="abs" style="left:73px;top:19px" width="14" height="21" viewBox="0 0 14 21"><path d="M1 1 L1 17 L4.6 13.6 L7.2 19.6 L9.6 18.6 L7 12.8 L12 12.6 Z" fill="#fff" stroke="#000" stroke-width="1"/></svg>
</body>
</html>
